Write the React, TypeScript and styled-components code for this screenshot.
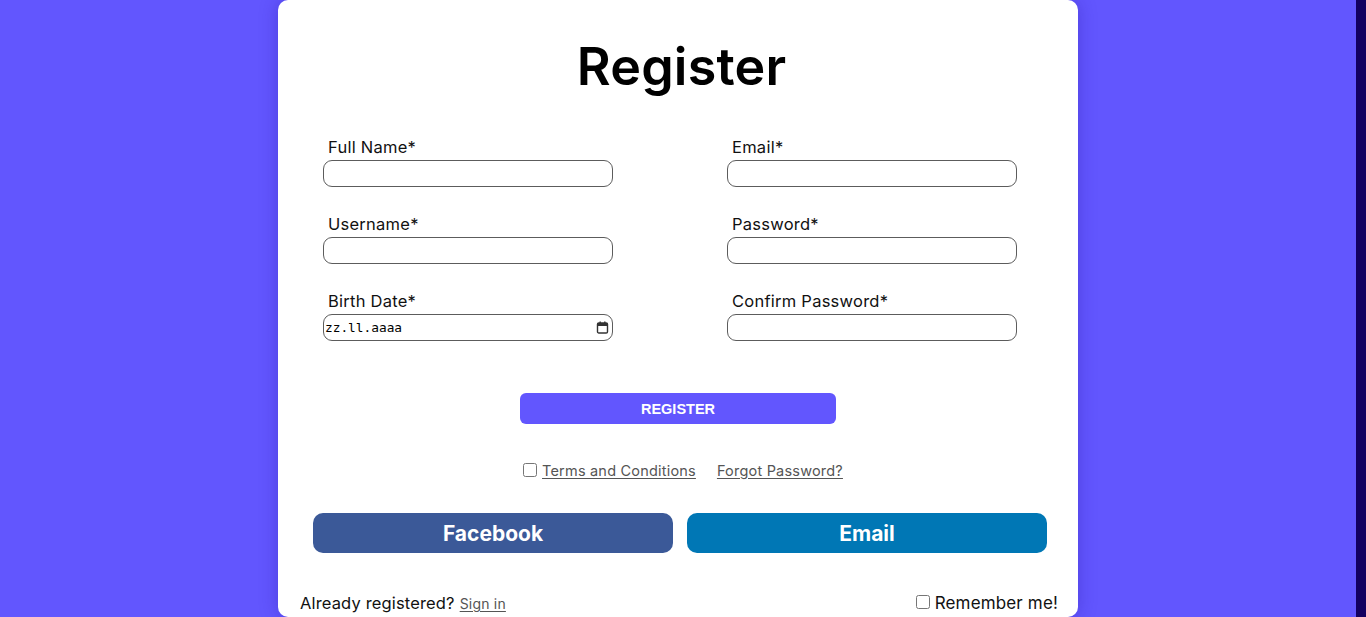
import React from "react";
import styled, { createGlobalStyle } from "styled-components";

const GlobalStyle = createGlobalStyle`
  html, body { margin: 0; padding: 0; }
  body {
    background: #6256fe;
    font-family: "Inter", "Liberation Sans", sans-serif;
    overflow: hidden;
  }
`;

const Page = styled.div`
  display: grid;
  grid-template-columns: 1fr 10px;
  height: 617px;
  width: 1366px;
`;

const Stage = styled.div`
  display: flex;
  justify-content: center;
  align-items: flex-start;
`;

const Strip = styled.div`
  background: #130060;
`;

const Card = styled.div`
  width: 800px;
  height: 617px;
  box-sizing: border-box;
  background: #fff;
  border-radius: 10px;
  box-shadow: 0 0 18px rgba(40, 20, 160, 0.35);
  display: flex;
  flex-direction: column;
  padding: 36px 20px 0 22px;
`;

const Title = styled.h1`
  margin: 0 0 0 5px;
  text-align: center;
  font-family: "Inter", sans-serif;
  font-weight: 600;
  font-size: 52px;
  line-height: 62px;
  color: #000;
  letter-spacing: 0.2px;
`;

const Grid = styled.div`
  display: grid;
  grid-template-columns: 290px 290px;
  column-gap: 114px;
  row-gap: 25px;
  margin: 37px 0 0 23px;
`;

const Field = styled.div`
  display: flex;
  flex-direction: column;
  position: relative;
`;

const Label = styled.label`
  font-size: 16.5px;
  letter-spacing: 0.25px;
  line-height: 24px;
  padding: 0 0 1px 5px;
  color: #111;
`;

const Input = styled.input`
  box-sizing: border-box;
  width: 290px;
  height: 27px;
  border: 1px solid #5c5c5c;
  border-radius: 9px;
  background: #fff;
  outline: none;
  padding: 0 1px;
  font-family: "DejaVu Sans Mono", "Liberation Mono", monospace;
  font-size: 12.8px;
  color: #000;
  &::placeholder { color: #000; }
`;

const CalIcon = styled.svg`
  position: absolute;
  right: 4px;
  bottom: 7px;
  width: 13px;
  height: 13px;
`;

const PrimaryButton = styled.button`
  align-self: center;
  margin: 52px 0 0 -2px;
  width: 316px;
  height: 31px;
  border: none;
  border-radius: 6px;
  background: #6256fe;
  color: #fff;
  font-family: "Liberation Sans", Arial, sans-serif;
  font-weight: 700;
  font-size: 14.5px;
`;

const LinksRow = styled.div`
  display: flex;
  justify-content: center;
  align-items: center;
  gap: 21px;
  margin: 38px 0 0 8px;
  font-size: 14.5px;
  letter-spacing: 0.2px;
`;

const CheckGroup = styled.label`
  display: inline-flex;
  align-items: center;
  gap: 4px;
`;

const Check = styled.input`
  width: 14px;
  height: 14px;
  margin: 0 1px 2px 0;
`;

const Link = styled.a`
  color: #555;
  text-decoration: underline;
  text-underline-offset: 2px;
`;

const SocialRow = styled.div`
  display: flex;
  gap: 14px;
  margin: 34px 0 0 13px;
`;

const SocialButton = styled.button<{ $bg: string }>`
  width: 360px;
  height: 40px;
  border: none;
  border-radius: 10px;
  background: ${(p) => p.$bg};
  color: #fff;
  font-family: "Inter", sans-serif;
  font-weight: 700;
  font-size: 21px;
`;

const Footer = styled.div`
  display: flex;
  justify-content: space-between;
  align-items: center;
  margin-top: 40px;
  font-size: 16.5px;
  letter-spacing: 0.15px;
  color: #111;
`;

const FooterText = styled.span`
  display: inline-flex;
  align-items: baseline;
  gap: 5px;
`;

const SmallLink = styled(Link)`
  font-size: 14px;
  letter-spacing: 0.2px;
`;

const RememberGroup = styled(CheckGroup)`
  font-size: 17px;
`;

export default function App() {
  return (
    <>
      <GlobalStyle />
      <Page>
        <Stage>
          <Card>
            <Title>Register</Title>
            <Grid>
              <Field>
                <Label>Full Name*</Label>
                <Input type="text" />
              </Field>
              <Field>
                <Label>Email*</Label>
                <Input type="email" />
              </Field>
              <Field>
                <Label>Username*</Label>
                <Input type="text" />
              </Field>
              <Field>
                <Label>Password*</Label>
                <Input type="password" />
              </Field>
              <Field>
                <Label>Birth Date*</Label>
                <Input type="text" placeholder="zz.ll.aaaa" />
                <CalIcon viewBox="0 0 13 13">
                  <rect x="1.5" y="2" width="10" height="10" rx="1.3" fill="none" stroke="#333" strokeWidth="1.4" />
                  <rect x="1.5" y="2" width="10" height="3" fill="#333" />
                  <rect x="3.5" y="0.5" width="1.4" height="2" fill="#333" />
                  <rect x="8.1" y="0.5" width="1.4" height="2" fill="#333" />
                </CalIcon>
              </Field>
              <Field>
                <Label>Confirm Password*</Label>
                <Input type="password" />
              </Field>
            </Grid>
            <PrimaryButton>REGISTER</PrimaryButton>
            <LinksRow>
              <CheckGroup>
                <Check type="checkbox" />
                <Link href="#">Terms and Conditions</Link>
              </CheckGroup>
              <Link href="#">Forgot Password?</Link>
            </LinksRow>
            <SocialRow>
              <SocialButton $bg="#3b5998">Facebook</SocialButton>
              <SocialButton $bg="#0077b5">Email</SocialButton>
            </SocialRow>
            <Footer>
              <FooterText>
                Already registered? <SmallLink href="#">Sign in</SmallLink>
              </FooterText>
              <RememberGroup>
                <Check type="checkbox" />
                Remember me!
              </RememberGroup>
            </Footer>
          </Card>
        </Stage>
        <Strip />
      </Page>
    </>
  );
}
